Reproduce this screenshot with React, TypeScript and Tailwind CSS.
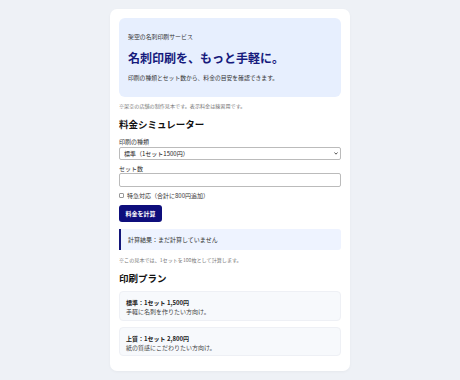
import { useState } from "react";

const plans = [
  { title: "標準：1セット 1,500円", desc: "手軽に名刺を作りたい方向け。" },
  { title: "上質：1セット 2,800円", desc: "紙の質感にこだわりたい方向け。" },
];

export default function App() {
  const [kind, setKind] = useState("standard");
  const [sets, setSets] = useState("");
  const [rush, setRush] = useState(false);
  const [result, setResult] = useState("計算結果：まだ計算していません");

  const calc = () => {
    const n = parseInt(sets) || 0;
    const price = (kind === "standard" ? 1500 : 2800) * n + (rush ? 800 : 0);
    setResult(`計算結果：${price.toLocaleString()}円`);
  };

  return (
    <div
      className="min-h-[380px] bg-[#eef1f6] pt-[9px] pb-[9px] text-[#222]"
      style={{ fontFamily: '"Noto Sans CJK JP", "Noto Sans", sans-serif' }}
    >
      <div className="mx-auto w-[240px] rounded-[7px] bg-white px-[9px] pt-[9px] pb-[15px] shadow-[0_1px_3px_rgba(0,0,0,0.04)]">
        <div className="h-[79px] rounded-[6px] bg-[#e7effe] px-[9px] pt-[14px]">
          <div className="text-[5.9px] leading-[10px] text-[#333]">架空の名刺印刷サービス</div>
          <div className="mt-[7px] text-[12px] leading-[18px] font-bold text-[#161a7c]">
            名刺印刷を、もっと手軽に。
          </div>
          <div className="mt-[6px] text-[5.8px] leading-[10px] text-[#333]">
            印刷の種類とセット数から、料金の目安を確認できます。
          </div>
        </div>

        <div className="mt-[5px] text-[5.1px] leading-[8px] text-[#777]">
          ※架空の店舗の制作見本です。表示料金は練習用です。
        </div>

        <h2 className="mt-[7px] text-[9.5px] leading-[14px] font-bold text-[#111]">料金シミュレーター</h2>

        <div className="mt-[6px] text-[6px] leading-[9px] text-[#333]">印刷の種類</div>
        <div className="relative mt-[1px]">
          <select
            value={kind}
            onChange={(e) => setKind(e.target.value)}
            className="block h-[13px] w-full appearance-none rounded-[2px] border border-[#bbb] bg-white px-[4px] text-[6px] leading-[11px] text-[#222] outline-none"
          >
            <option value="standard">標準（1セット1500円）</option>
            <option value="premium">上質（1セット2800円）</option>
          </select>
          <svg
            className="pointer-events-none absolute top-[5px] right-[3px] h-[3px] w-[4px]"
            viewBox="0 0 4 3"
          >
            <path d="M0.5 0.5 L2 2.2 L3.5 0.5" fill="none" stroke="#444" strokeWidth="0.9" />
          </svg>
        </div>

        <div className="mt-[4px] text-[6px] leading-[9px] text-[#333]">セット数</div>
        <input
          type="text"
          value={sets}
          onChange={(e) => setSets(e.target.value)}
          className="block h-[14px] w-full rounded-[2px] border border-[#bbb] bg-white px-[3px] text-[6px] outline-none"
        />

        <label className="mt-[4px] flex h-[9px] items-center gap-[3px] text-[6px] leading-[9px] text-[#333]">
          <input
            type="checkbox"
            checked={rush}
            onChange={(e) => setRush(e.target.checked)}
            className="h-[5px] w-[5px] appearance-none rounded-[1px] border border-[#999] bg-white"
          />
          特急対応（合計に800円追加）
        </label>

        <button
          onClick={calc}
          className="mt-[5px] flex h-[17px] w-[43px] items-center justify-center rounded-[3px] bg-[#0e0e7c] text-[6px] font-bold text-white"
        >
          料金を計算
        </button>

        <div className="mt-[7px] flex h-[21px] items-center rounded-r-[3px] border-l-2 border-[#14167a] bg-[#eef3ff] pl-[7px] text-[6px] text-[#333]">
          {result}
        </div>

        <div className="mt-[6px] text-[5.1px] leading-[8px] text-[#777]">
          ※この見本では、1セットを100枚として計算します。
        </div>

        <h2 className="mt-[7px] text-[9.5px] leading-[14px] font-bold text-[#111]">印刷プラン</h2>

        {plans.map((p, i) => (
          <div
            key={i}
            className={`mt-[6px] rounded-[4px] border border-[#eef0f5] bg-[#f7f9fc] px-[6px] pt-[6px] ${
              i === 0 ? "h-[30px]" : "h-[29px]"
            }`}
          >
            <div className="text-[6px] leading-[9px] font-bold text-[#222]">{p.title}</div>
            <div className="text-[6px] leading-[9px] text-[#444]">{p.desc}</div>
          </div>
        ))}
      </div>
    </div>
  );
}
